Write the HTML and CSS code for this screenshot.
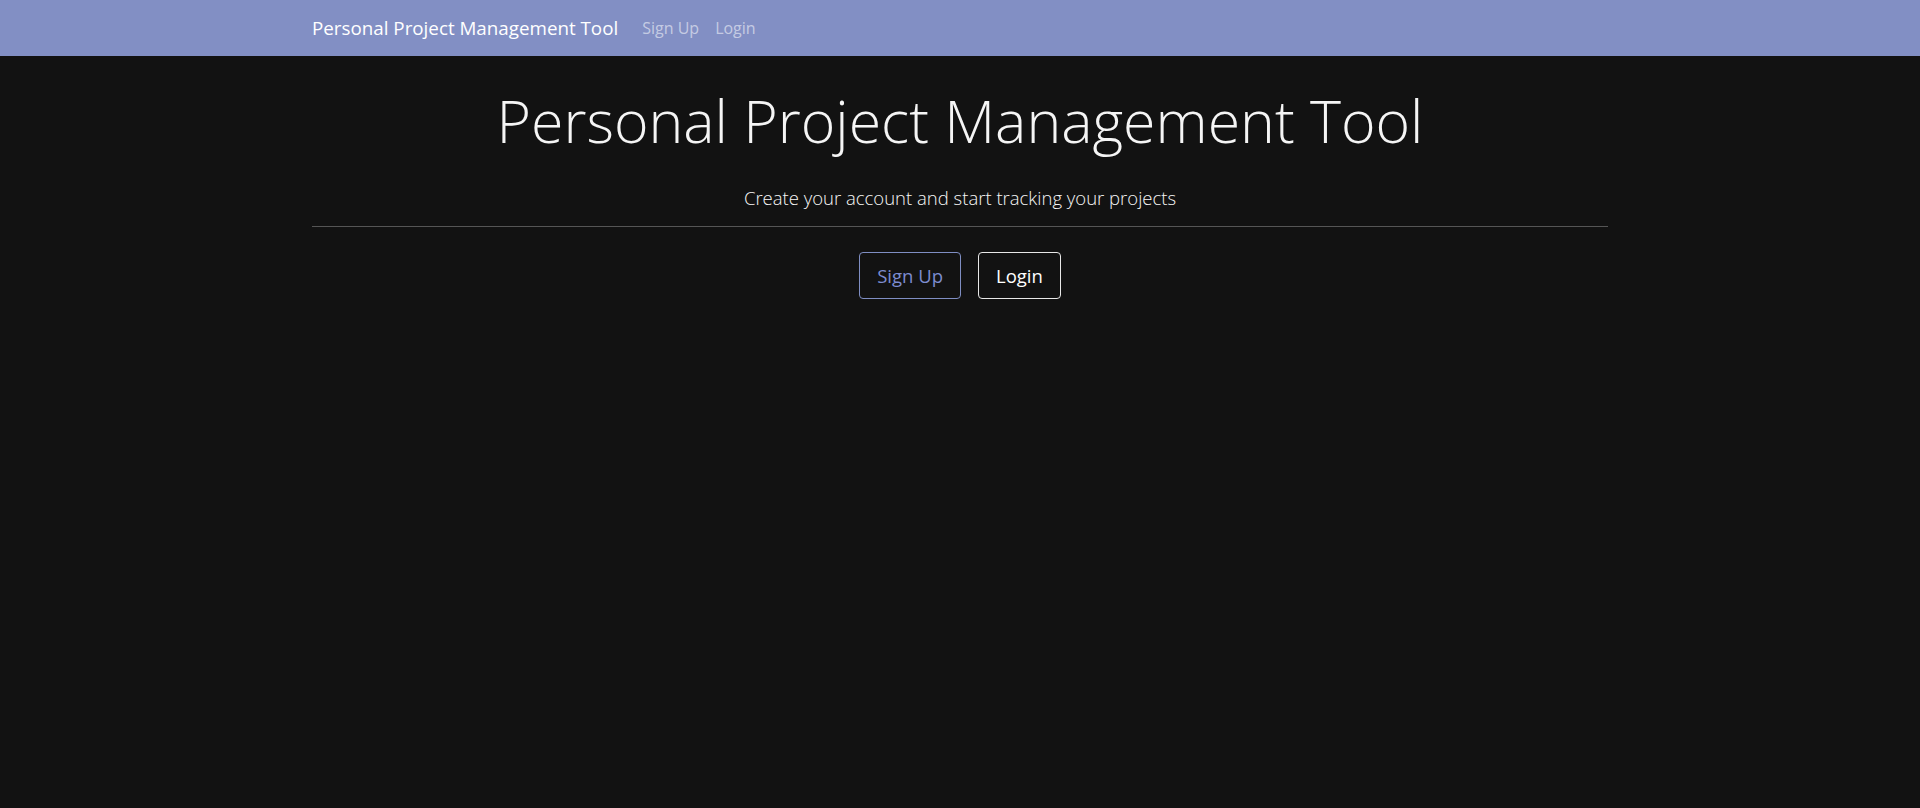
FILE: index.html
```html
<!DOCTYPE html>
<html lang="en">
<head>
<meta charset="utf-8">
<title>Personal Project Management Tool</title>
<link rel="stylesheet" href="styles.css">
</head>
<body>
<nav class="navbar">
  <div class="container nav-inner">
    <a class="brand" href="#">Personal Project Management Tool</a>
    <ul class="nav-links">
      <li><a href="#">Sign Up</a></li>
      <li><a href="#">Login</a></li>
    </ul>
  </div>
</nav>
<main class="container landing">
  <h1 class="title">Personal Project Management Tool</h1>
  <p class="lead">Create your account and start tracking your projects</p>
  <hr class="divider">
  <div class="actions">
    <a class="btn btn-primary-outline" href="#">Sign Up</a>
    <a class="btn btn-light-outline" href="#">Login</a>
  </div>
</main>
</body>
</html>
```
FILE: styles.css
```css
* { box-sizing: border-box; }
html, body { margin: 0; padding: 0; }
body {
  background: #121212;
  color: #f2f2f2;
  font-family: "Open Sans", "Noto Sans", sans-serif;
  font-size: 16px;
  line-height: 1.5;
}
a { text-decoration: none; }
.container {
  max-width: 1320px;
  margin: 0 auto;
  padding: 0 12px;
}
.navbar {
  background: #828fc4;
  height: 56px;
}
.nav-inner {
  display: flex;
  align-items: center;
  height: 100%;
}
.brand {
  color: #fff;
  font-size: 18.8px;
  margin-right: 16px;
  white-space: nowrap;
}
.nav-links {
  display: flex;
  list-style: none;
  margin: 0;
  padding: 0;
}
.nav-links a {
  display: block;
  padding: 8px;
  color: rgba(255,255,255,0.55);
  font-size: 16px;
}
.landing {
  text-align: center;
}
.title {
  margin: 29px 0 0;
  font-weight: 300;
  font-size: 59px;
  line-height: 1.2;
  color: #f5f5f5;
}
.lead {
  margin: 28px 0 0;
  font-size: 18.5px;
  font-weight: 300;
  color: #f7f7f7;
}
.divider {
  margin: 14px 0 25px;
  border: 0;
  border-top: 1px solid #555;
}
.actions {
  display: flex;
  justify-content: center;
  gap: 17px;
}
.btn {
  display: inline-block;
  height: 47px;
  line-height: 45px;
  padding: 0 17px;
  font-size: 18.5px;
  border-radius: 4px;
  border: 1px solid;
}
.btn-primary-outline {
  color: #7d8cd0;
  border-color: #7f8ec3;
}
.btn-light-outline {
  color: #fff;
  border-color: #e8e8e8;
}
```
